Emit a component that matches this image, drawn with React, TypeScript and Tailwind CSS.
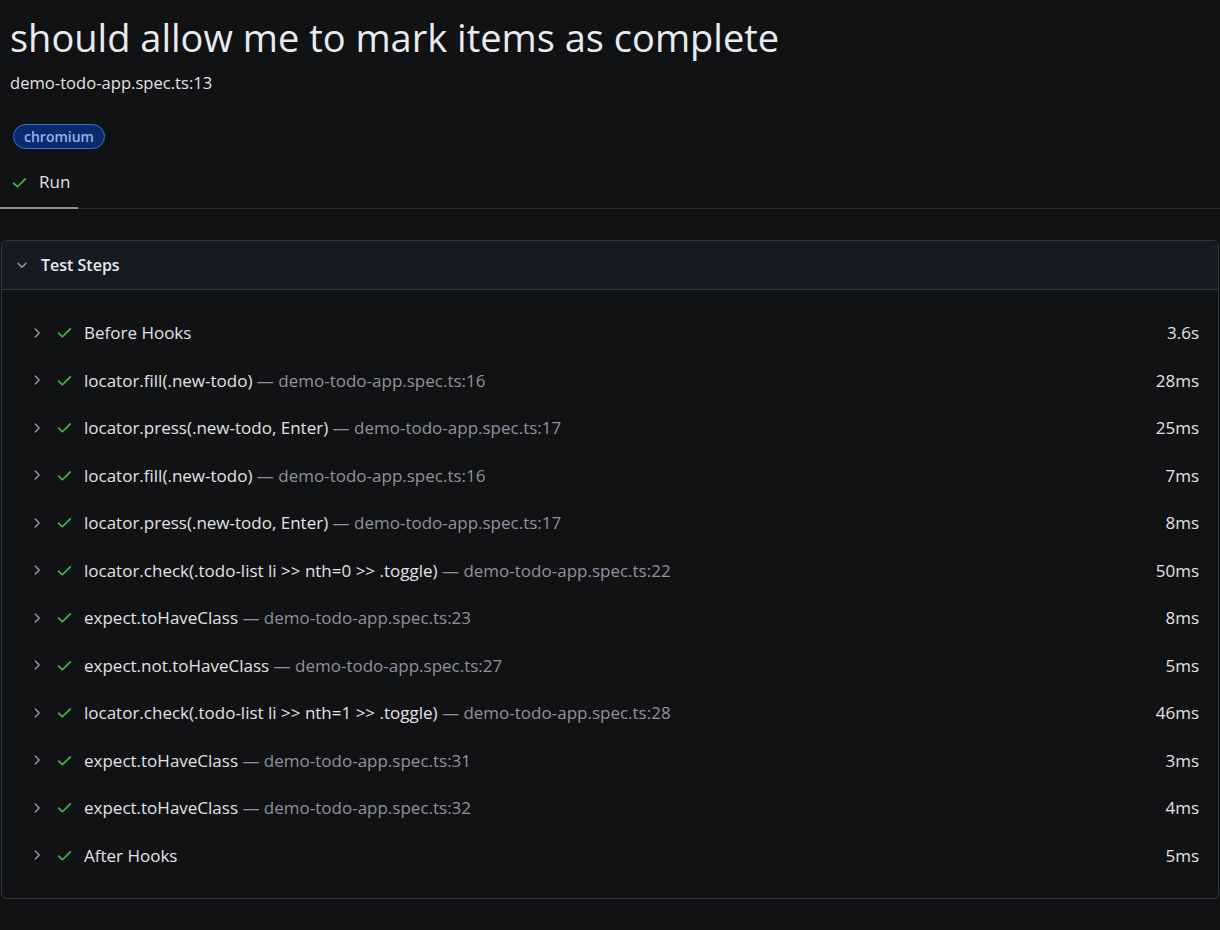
import React from "react";

const Check = ({ className = "" }: { className?: string }) => (
  <svg viewBox="0 0 16 16" className={className} fill="none" stroke="currentColor" strokeWidth="1.6" strokeLinecap="round" strokeLinejoin="round">
    <path d="M2.5 8.5l3.5 3.5 7.5-7.5" />
  </svg>
);

const ChevronRight = ({ className = "" }: { className?: string }) => (
  <svg viewBox="0 0 16 16" className={className} fill="none" stroke="currentColor" strokeWidth="1.5" strokeLinecap="round" strokeLinejoin="round">
    <path d="M6 3.5l4.5 4.5-4.5 4.5" />
  </svg>
);

const ChevronDown = ({ className = "" }: { className?: string }) => (
  <svg viewBox="0 0 16 16" className={className} fill="none" stroke="currentColor" strokeWidth="1.5" strokeLinecap="round" strokeLinejoin="round">
    <path d="M3.5 6l4.5 4.5 4.5-4.5" />
  </svg>
);

type Step = { title: string; loc?: string; time: string };

const steps: Step[] = [
  { title: "Before Hooks", time: "3.6s" },
  { title: "locator.fill(.new-todo)", loc: "demo-todo-app.spec.ts:16", time: "28ms" },
  { title: "locator.press(.new-todo, Enter)", loc: "demo-todo-app.spec.ts:17", time: "25ms" },
  { title: "locator.fill(.new-todo)", loc: "demo-todo-app.spec.ts:16", time: "7ms" },
  { title: "locator.press(.new-todo, Enter)", loc: "demo-todo-app.spec.ts:17", time: "8ms" },
  { title: "locator.check(.todo-list li >> nth=0 >> .toggle)", loc: "demo-todo-app.spec.ts:22", time: "50ms" },
  { title: "expect.toHaveClass", loc: "demo-todo-app.spec.ts:23", time: "8ms" },
  { title: "expect.not.toHaveClass", loc: "demo-todo-app.spec.ts:27", time: "5ms" },
  { title: "locator.check(.todo-list li >> nth=1 >> .toggle)", loc: "demo-todo-app.spec.ts:28", time: "46ms" },
  { title: "expect.toHaveClass", loc: "demo-todo-app.spec.ts:31", time: "3ms" },
  { title: "expect.toHaveClass", loc: "demo-todo-app.spec.ts:32", time: "4ms" },
  { title: "After Hooks", time: "5ms" },
];

export default function App() {
  return (
    <div className="min-h-[930px] w-full bg-[#111213] text-[#e6e9ed] font-['Open_Sans',sans-serif]">
      <div className="px-[10px] pt-[12px]">
        <h1 className="text-[38px] leading-[50px] text-[#e8ebef]">should allow me to mark items as complete</h1>
        <div className="mt-[9px] text-[16.6px] leading-[24px] text-[#e0e3e7]">demo-todo-app.spec.ts:13</div>
        <div className="mt-[29px] flex">
          <span className="ml-[3px] inline-flex h-[25px] items-center rounded-full border border-[#3d6fd6] bg-[#0b2a6b] px-[10px] text-[14px] font-semibold text-[#8cb4f5]">
            chromium
          </span>
        </div>
      </div>
      <div className="mt-[8px] border-b border-[#2a2d31]">
        <div className="-mb-px inline-flex h-[52px] w-[78px] items-center gap-[11px] border-b-2 border-[#8b9096] pl-[11px]">
          <Check className="h-[17px] w-[17px] text-[#3fb950]" />
          <span className="text-[17px] text-[#e0e3e7]">Run</span>
        </div>
      </div>
      <div className="mx-[1px] mt-[31px] overflow-hidden rounded-[6px] border border-[#30363d]">
        <div className="flex h-[49px] items-center gap-[12px] border-b border-[#30363d] bg-[#161b22] pl-[13px]">
          <ChevronDown className="h-[14px] w-[14px] text-[#9aa1a9]" />
          <span className="text-[16px] font-semibold text-[#e6e9ed]">Test Steps</span>
        </div>
        <div className="pt-[19px] pb-[19px]">
          {steps.map((s, i) => (
            <div key={i} className="flex h-[47.5px] items-center pl-[28px] pr-[19px]">
              <ChevronRight className="h-[14px] w-[14px] text-[#9aa1a9]" />
              <Check className="ml-[12px] h-[17px] w-[17px] text-[#3fb950]" />
              <span className="ml-[11px] flex-1 text-[17px] text-[#e0e3e7]">
                {s.title}
                {s.loc && <span className="text-[#8b949e]"> — {s.loc}</span>}
              </span>
              <span className="text-[17px] text-[#e0e3e7]">{s.time}</span>
            </div>
          ))}
        </div>
      </div>
    </div>
  );
}
